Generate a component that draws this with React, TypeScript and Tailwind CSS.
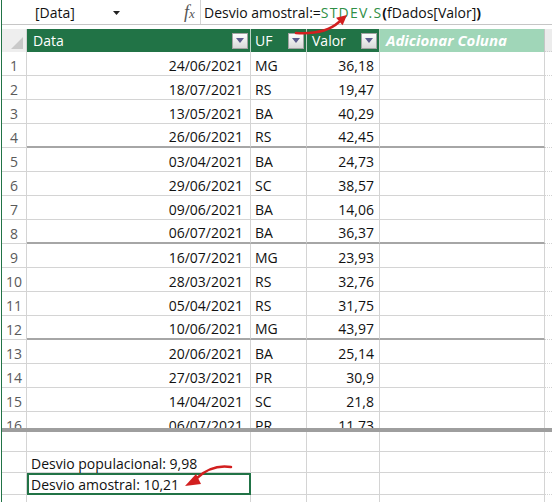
const rows = [
  ['1', '24/06/2021', 'MG', '36,18'],
  ['2', '18/07/2021', 'RS', '19,47'],
  ['3', '13/05/2021', 'BA', '40,29'],
  ['4', '26/06/2021', 'RS', '42,45'],
  ['5', '03/04/2021', 'BA', '24,73'],
  ['6', '29/06/2021', 'SC', '38,57'],
  ['7', '09/06/2021', 'BA', '14,06'],
  ['8', '06/07/2021', 'BA', '36,37'],
  ['9', '16/07/2021', 'MG', '23,93'],
  ['10', '28/03/2021', 'RS', '32,76'],
  ['11', '05/04/2021', 'RS', '31,75'],
  ['12', '10/06/2021', 'MG', '43,97'],
  ['13', '20/06/2021', 'BA', '25,14'],
  ['14', '27/03/2021', 'PR', '30,9'],
  ['15', '14/04/2021', 'SC', '21,8'],
];

const FilterButton = () => (
  <span className="w-[16px] h-[16px] shrink-0 border border-[#a3a3a3] bg-linear-to-b from-[#fdfdfd] to-[#d9d9d9] flex items-center justify-center">
    <svg width="8" height="5" viewBox="0 0 8 5">
      <path d="M0 0h8L4 5z" fill="#5b5b8c" />
    </svg>
  </span>
);

const DataRow = ({r, thick}: {r: string[]; thick: boolean}) => {
  const b = thick ? 'border-b-2 border-b-[#a6a6a6]' : 'border-b';
  return (
    <div className="flex h-[24px] shrink-0">
      <div className="w-[25px] shrink-0 border-r border-b border-[#d4d4d4] flex items-center justify-center pt-[3px] text-[#5a5a5a]">
        {r[0]}
      </div>
      <div className={`w-[224px] shrink-0 border-r border-[#d4d4d4] ${b} flex items-center justify-end pt-[3px] pr-[7px]`}>
        {r[1]}
      </div>
      <div className={`w-[56px] shrink-0 border-r border-[#d4d4d4] ${b} flex items-center pt-[3px] pl-[4px]`}>{r[2]}</div>
      <div className={`w-[73px] shrink-0 border-r border-[#d4d4d4] ${b} flex items-center justify-end pt-[3px] pr-[5px]`}>
        {r[3]}
      </div>
      <div className={`w-[165px] shrink-0 border-r border-[#d4d4d4] ${b}`}></div>
      <div className="flex-1 border-b border-dotted border-[#d4d4d4]"></div>
    </div>
  );
};

const BlankRow = ({h, children}: {h: string; children?: React.ReactNode}) => (
  <div className={`flex ${h} shrink-0`}>
    <div className="w-[25px] shrink-0 border-r border-b border-[#d4d4d4]"></div>
    {children ?? <div className="w-[224px] shrink-0 border-r border-b border-[#d4d4d4]"></div>}
    <div className="w-[56px] shrink-0 border-r border-b border-[#d4d4d4]"></div>
    <div className="w-[73px] shrink-0 border-r border-b border-[#d4d4d4]"></div>
    <div className="w-[165px] shrink-0 border-r border-b border-[#d4d4d4]"></div>
    <div className="flex-1 border-b border-dotted border-[#d4d4d4]"></div>
  </div>
);

export default function App() {
  return (
    <div className="relative w-[552px] h-[502px] overflow-hidden bg-white text-[14px] text-[#111] font-['Open_Sans','Noto_Sans',sans-serif]">
      <div className="ml-[1px] h-full border-l border-[#217346] flex flex-col">
        {/* formula bar */}
        <div className="h-[25px] shrink-0 border-b border-[#c6c6c6] flex items-center">
          <div className="w-[198px] shrink-0 flex items-center h-full">
            <span className="ml-[33px] w-[78px]">[Data]</span>
            <svg width="7" height="4" viewBox="0 0 7 4" className="mt-[1px]">
              <path d="M0 0h7L3.5 4z" fill="#222" />
            </svg>
            <span className="ml-[64px] italic text-[#555] font-['Liberation_Serif',serif] text-[18px] leading-none">
              f<span className="text-[13px]">x</span>
            </span>
          </div>
          <div className="h-full border-l border-[#d4d4d4] pl-[3px] flex items-center whitespace-nowrap">
            Desvio amostral:=<span className="text-[#2f8f46] tracking-[1.2px]">STDEV.S</span>
            <b className="font-bold">(</b>fDados[Valor]<b className="font-bold">)</b>
          </div>
        </div>
        <div className="h-[4px] shrink-0"></div>

        {/* header */}
        <div className="flex h-[23px] shrink-0 text-white">
          <div className="w-[25px] shrink-0 bg-[#eeeeee] border-r border-[#d4d4d4] relative">
            <svg width="12" height="12" viewBox="0 0 12 12" className="absolute right-[3px] bottom-[3px]">
              <path d="M12 0V12H0z" fill="#c9c9c9" />
            </svg>
          </div>
          <div className="w-[224px] shrink-0 bg-[#217346] border-r border-[#bcd3c5] flex items-center justify-between pl-[6px] pr-[2px]">
            <span>Data</span>
            <FilterButton />
          </div>
          <div className="w-[56px] shrink-0 bg-[#217346] border-r border-[#bcd3c5] flex items-center justify-between pl-[4px] pr-[2px]">
            <span>UF</span>
            <FilterButton />
          </div>
          <div className="w-[73px] shrink-0 bg-[#217346] border-r border-[#bcd3c5] flex items-center justify-between pl-[5px] pr-[2px]">
            <span>Valor</span>
            <FilterButton />
          </div>
          <div className="w-[165px] shrink-0 bg-[#a0d6b8] border-r border-[#c6c6c6] flex items-center pl-[6px] text-[15px] font-bold italic whitespace-nowrap">
            Adicionar Coluna
          </div>
          <div className="flex-1 bg-[#ececec] border-b border-dotted border-[#d0d0d0]"></div>
        </div>

        {rows.map((r, i) => (
          <DataRow key={r[0]} r={r} thick={i === 3 || i === 7 || i === 11} />
        ))}
        <div className="h-[16px] shrink-0 overflow-hidden">
          <DataRow r={['16', '06/07/2021', 'PR', '11,73']} thick={false} />
        </div>

        {/* split bar */}
        <div className="h-[4px] shrink-0 bg-[#9e9e9e]"></div>

        <BlankRow h="h-[20px]" />
        <BlankRow h="h-[21px]">
          <div className="w-[224px] shrink-0 border-r border-b border-[#d4d4d4] flex items-center pt-[2px] pl-[4px] whitespace-nowrap">
            Desvio populacional: 9,98
          </div>
        </BlankRow>
        <BlankRow h="h-[22px]">
          <div className="w-[224px] shrink-0 border-2 border-[#217346] flex items-center pt-[1px] pl-[2px] whitespace-nowrap">
            Desvio amostral: 10,21
          </div>
        </BlankRow>
        <BlankRow h="h-[22px]" />
      </div>

      {/* red arrows */}
      <svg width="552" height="502" viewBox="0 0 552 502" className="absolute inset-0 pointer-events-none">
        <path d="M296 33 C312 34 328 32 339 22" fill="none" stroke="#d21f1f" strokeWidth="2.5" strokeLinecap="round" />
        <polygon points="347,15 342.6,25.3 336.1,17.7" fill="#d21f1f" />
        <path d="M231 467 Q212 464 197 478" fill="none" stroke="#d21f1f" strokeWidth="2.5" strokeLinecap="round" />
        <polygon points="185,486 196,474 201,484" fill="#d21f1f" />
      </svg>
    </div>
  );
}
